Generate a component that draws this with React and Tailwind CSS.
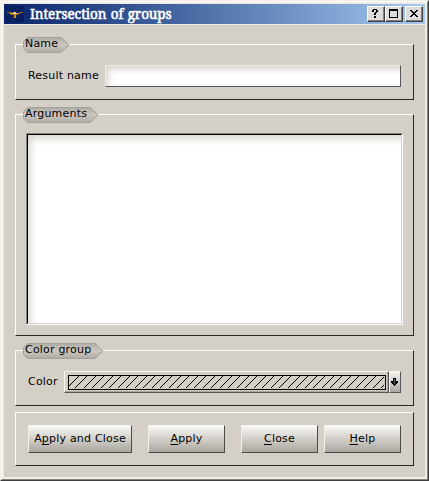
import React from "react";

function Tag({ text, width, className }) {
  const w = width;
  return (
    <div className={`absolute -top-[9px] left-[7px] h-[18px] ${className}`}>
      <svg className="absolute inset-0" width={w} height="18" viewBox={`0 0 ${w} 18`}>
        <defs>
          <linearGradient id={`tag-${w}`} x1="0" y1="0" x2="0" y2="1">
            <stop offset="0" stopColor="#b0aca6" />
            <stop offset="0.5" stopColor="#cbc7c0" />
            <stop offset="1" stopColor="#aeaaa4" />
          </linearGradient>
        </defs>
        <path
          d={`M4.5 1.5H${w - 9}L${w - 1} 9L${w - 9} 16.5H4.5L0.5 12.5V5.5Z`}
          fill={`url(#tag-${w})`}
          stroke="#a3a19b"
        />
      </svg>
      <span className="relative block pl-[2px] leading-[16px] whitespace-nowrap">{text}</span>
    </div>
  );
}

function Group({ className, children }) {
  return (
    <section
      className={`relative mx-[11px] border border-t-white border-l-white border-r-[#292825] border-b-[#292825] ${className}`}
    >
      {children}
    </section>
  );
}

function TitleButton({ children, className = "" }) {
  return (
    <button
      className={`relative h-4 w-[18px] border border-t-white border-l-white border-r-[#404040] border-b-[#404040] bg-[#dcdcdc] shadow-[inset_-1px_-1px_0_#808080] ${className}`}
    >
      <svg className="block" width="16" height="14" viewBox="0 0 16 14" shapeRendering="crispEdges">
        {children}
      </svg>
    </button>
  );
}

function PushButton({ mnemonic, before = "", after, className }) {
  return (
    <button
      className={`h-7 border border-t-[#fbf8f1] border-l-[#f5f0e7] border-r-[#4b4b49] border-b-[#4b4b49] bg-linear-to-b from-[#f9f8f6] via-[#d2cfc9] to-[#aaa7a2] leading-[26px] whitespace-nowrap ${className}`}
    >
      {before}
      <span className="underline decoration-1 underline-offset-2 [text-decoration-skip-ink:none]">{mnemonic}</span>
      {after}
    </button>
  );
}

// One-pixel steps of the diagonal fill, clipped to the swatch.
const hatchPath = Array.from({ length: 40 }, (_, i) => Math.round(i * 8.5 - 2.5))
  .flatMap((x) => Array.from({ length: 12 }, (_, y) => `M${x + 11 - y} ${y}h1v1h-1z`))
  .join("");

export default function App() {
  return (
    <div className="h-[481px] w-[429px] overflow-hidden border border-t-[#efede5] border-l-[#efede5] border-r-[#40403e] border-b-[#40403e] bg-[#d4d0c8] font-['DejaVu_Sans',sans-serif] text-[11px] tracking-[0.2px] text-black">
      <div className="h-[479px] w-[427px] border border-t-white border-l-white border-r-[#85837d] border-b-[#85837d]">
        <div className="h-[477px] w-[425px] border-2 border-[#efede5]">
          <header className="flex h-5 items-center bg-linear-to-r from-[#0a246a] to-[#a6caf0] pr-[2px]">
            <svg className="ml-[2px] shrink-0" width="18" height="16" viewBox="0 0 18 16">
              <path d="M0 0H18V16H0Z" fill="#06205f" />
              <path d="M1 6H5L7 7H12L14 6H17V7H15L12 9H10V11L11 12H6L8 11V9H5L3 7H1Z" fill="#8b6720" />
              <path d="M4 7H12V8H4Z" fill="#e3ad42" />
              <path d="M7 6H10V8H7Z" fill="#f3ca79" />
              <path d="M8 8H10V12H8Z" fill="#c98d2c" />
            </svg>
            <h1 className="ml-[6px] flex-1 font-['Noto_Serif','Liberation_Serif',serif] text-[13.5px] leading-[21px] font-normal tracking-[-0.1px] [word-spacing:1px] whitespace-nowrap text-white [-webkit-text-stroke:0.55px_white]">
              Intersection of groups
            </h1>
            <TitleButton>
              <path
                d="M5 2H9V3H5Z M4 3H6V5H4Z M8 3H10V5H8Z M7 5H9V6H7Z M6 6H8V8H6Z M6 9H8V11H6Z"
                fill="#000"
              />
            </TitleButton>
            <TitleButton>
              <path d="M3 2H12V11H3Z M4 4V10H11V4Z" fillRule="evenodd" fill="#000" />
            </TitleButton>
            <TitleButton className="ml-[2px]">
              <path
                d="M4 3H6V4H4Z M10 3H12V4H10Z M5 4H7V5H5Z M9 4H11V5H9Z M6 5H10V6H6Z M7 6H9V7H7Z M6 7H10V8H6Z M5 8H7V9H5Z M9 8H11V9H9Z M4 9H6V10H4Z M10 9H12V10H10Z"
                fill="#000"
              />
            </TitleButton>
          </header>
          <div className="h-px bg-[#efede5]" />

          <Group className="mt-[19px] flex h-14 pt-5 pl-3">
            <Tag text="Name" width={47} className="w-[47px]" />
            <label className="w-[77px] leading-[22px] whitespace-nowrap">Result name</label>
            <input className="h-[22px] w-[296px] border border-t-[#f3ece1] border-l-[#f3ece1] border-r-[#555] border-b-[#555] bg-white shadow-[inset_7px_8px_7px_-5px_#d4d0c8]" />
          </Group>

          <Group className="mt-[14px] h-[222px] pt-[18px] pl-[10px]">
            <Tag text="Arguments" width={76} className="w-[76px]" />
            <div className="h-[192px] w-[377px] border border-t-[#85837d] border-l-[#85837d] border-r-white border-b-white">
              <div className="h-[190px] w-[375px] border border-t-black border-l-black border-r-[#d4d0c8] border-b-[#d4d0c8] bg-white shadow-[inset_9px_10px_8px_-7px_#d4d0c8]" />
            </div>
          </Group>

          <Group className="mt-[14px] flex h-14 pt-5 pl-3">
            <Tag text="Color group" width={81} className="w-[81px]" />
            <label className="w-9 leading-[22px]">Color</label>
            <div className="h-[22px] w-[325px] border border-t-[#f8f4ed] border-l-[#f8f4ed] border-r-[#555] border-b-[#555] bg-[#d4d0c8] pt-[3px] pl-[3px] shadow-[inset_-1px_-1px_0_#aaa7a2]">
              <svg className="block" width="318" height="15" viewBox="0 0 318 15" shapeRendering="crispEdges">
                <path d="M0 0H318V15H0Z M1 1V14H317V1Z" fillRule="evenodd" fill="#000" />
                <svg x="1" y="1" width="315" height="12" viewBox="0 0 315 12">
                  <path d={hatchPath} fill="#000" />
                </svg>
              </svg>
            </div>
            <button className="h-[22px] w-3 border border-t-[#f8f4ed] border-l-[#f8f4ed] border-r-[#555] border-b-[#555] bg-linear-to-b from-[#f5f3ef] to-[#aaa7a2]">
              <svg className="block" width="10" height="20" viewBox="0 0 10 20" shapeRendering="crispEdges">
                <path d="M3 6H6V9H8V11H7V12H6V13H5V14H4V13H3V12H2V11H1V9H3Z" fill="#000" />
                <path d="M4 7H5V12H4Z" fill="#666" />
              </svg>
            </button>
          </Group>

          <Group className="mt-[6px] flex h-[54px] pt-3 pl-3">
            <PushButton before="A" mnemonic="p" after="ply and Close" className="w-[104px]" />
            <PushButton mnemonic="A" after="pply" className="ml-4 w-[77px]" />
            <PushButton mnemonic="C" after="lose" className="ml-4 w-[77px]" />
            <PushButton mnemonic="H" after="elp" className="ml-[6px] w-[77px]" />
          </Group>
        </div>
      </div>
    </div>
  );
}
